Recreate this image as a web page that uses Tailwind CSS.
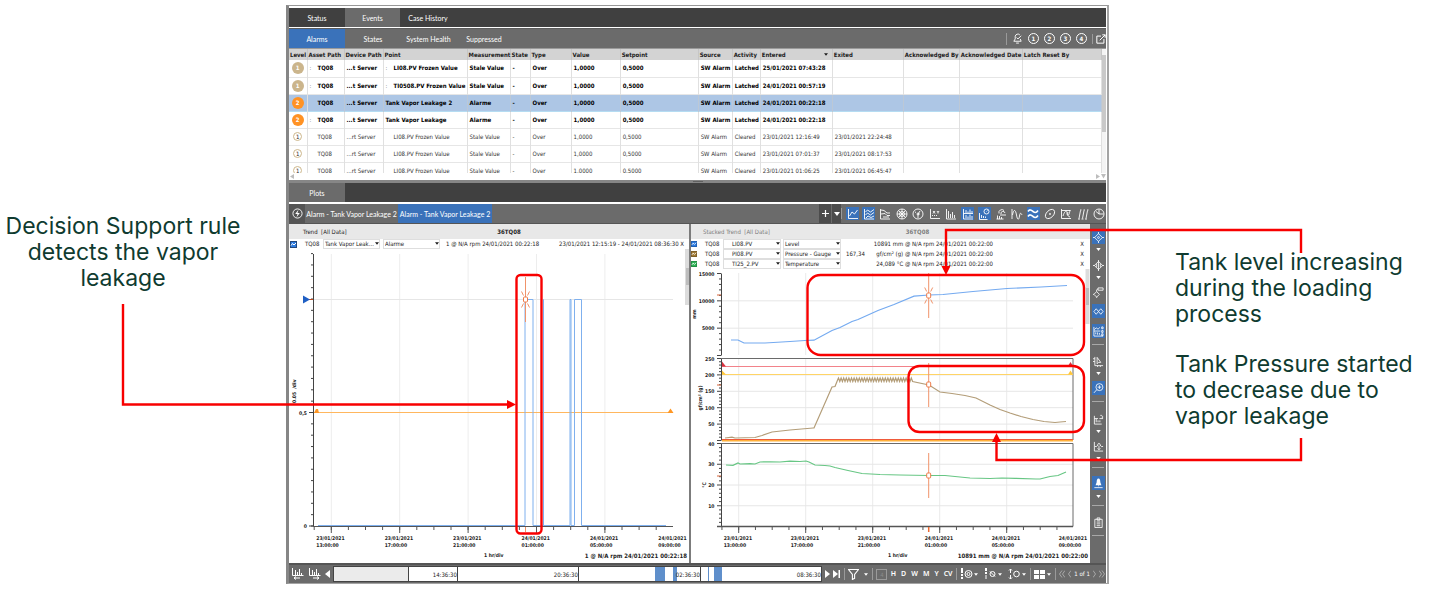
<!DOCTYPE html>
<html lang="en">
<head>
<meta charset="utf-8">
<title>Alarm events and plots</title>
<meta name="viewport" content="width=device-width, initial-scale=1">
<script src="https://cdn.jsdelivr.net/npm/@tailwindcss/browser@4"></script>
</head>
<body class="bg-white">
<svg class="hidden" aria-hidden="true">
  <defs>
    <g id="i-trend"><path d="M1.500 1v9.500h9.500M2.500 8l2.500-4 2.500 2 3-4"/></g>
    <g id="i-stack"><path d="M1.500 1v10h9.500M2.500 4l2-2 3 2 3.500-2.500M2.500 7l2-2 3 2 3.500-2.500M3 10l2-2 3 1.500 3-1.500"/></g>
    <g id="i-multi"><path d="M1.500 1v10h9.500M2 2l3 .5 3 2.500h3M2 6l4-.5 2 2h3M4 9h6"/></g>
    <g id="i-polar"><circle cx="6" cy="6" r="5"/><circle cx="6" cy="6" r="2.500"/><path d="M1 6h10M6 1v10M2.500 2.500l7 7M9.500 2.500l-7 7"/></g>
    <g id="i-dial"><circle cx="6" cy="6" r="5"/><path d="M6 6l2-3M6 6v4M6 6h1.500M3 4l1 .5"/><circle cx="6" cy="6" r="1"/></g>
    <g id="i-xy"><path d="M1.500 1v9.500h9.500M3 7.500h1M5 7.500h1M7 7.500h1M4 3l2 2.500M6 3L4 5.500M8 3l1 1.500 1-1.500M9 4.500v1"/></g>
    <g id="i-bars"><path d="M1.500 1v10h9.500M3.500 3v7M5.500 6v4M7.500 4v6M9.500 7v3"/></g>
    <g id="i-bars2"><path d="M1.500 1v10h9.500M1.500 5.500h9.500M4 2v3M6 3.500v1.500M8 1.500v3.500M10 3v2M4 7v3M6 8.500v1.500M8 6.500v3.500M10 8v2"/></g>
    <g id="i-orbitbar"><circle cx="8.500" cy="3.500" r="2.500"/><path d="M1.500 5v6.500h8M3.500 7v3M5.500 8v2M7.500 8.500v1.500M8.500 3.500l1-1"/></g>
    <g id="i-casc"><path d="M1.500 11h7M2.500 11V7.500M4.500 11V8M6.500 11V9M4 5.500a3 3 0 0 1 5-3M6 6a2 2 0 0 1 4-1M5 7h6"/></g>
    <g id="i-wave"><path d="M1 1v10M1.500 7c1-6 3-6 4 0s2.500 5 3 1 1.500-3 2.500-1"/></g>
    <g id="i-waves"><path stroke-width="1.600" d="M1 3.500c2-3 3.500-1 5 0s3 2 5-1M1 8.500c2-3 3.500-1 5 0s3 2 5-1"/></g>
    <g id="i-orbit"><ellipse cx="6" cy="6" rx="5.500" ry="3.500" transform="rotate(-45 6 6)"/><circle cx="6" cy="6" r=".6"/></g>
    <g id="i-env"><path d="M1.500 1v9.500h9.500M2 2.500h8.500M3 8c2-6 4-6 4-3s2 4 3-3M10 9c-2 0-3-3-2-5"/></g>
    <g id="i-water"><path d="M1 11h2M4.500 11h2M8 11h2M2 10.500l1.500-8M5.500 10.500l1.500-8M9 10.500l1.500-8M3 2h1.500M6.500 2H8M10 2h1.500"/></g>
    <g id="i-clock"><circle cx="6" cy="6" r="5"/><path d="M6 1.500v4.500h4.500M6 6L3 3.500"/></g>
    <g id="i-target"><path d="M6 1.800L10.200 6 6 10.200 1.800 6zM6 0v2M6 10v2M0 6h2M10 6h2"/><circle cx="6" cy="6" r="1"/></g>
    <g id="i-target2"><path d="M6 1.500L10.500 6 6 10.500 1.500 6zM6 0v12M0 6h2M10 6h2M4 4v4M8 4v4"/></g>
    <g id="i-tag"><path d="M4 5L7 8l-3 3-3-3zM4 12v-1M0 8h1M4 5V3l1.500-1M5.500 1h5.500v2.500H5.500z"/></g>
    <g id="i-pair"><path d="M3.500 3L6 6 3.500 9 1 6zM8.500 3L11 6 8.500 9 6 6z"/></g>
    <g id="i-panel"><path d="M1 1v10h10M1.500 4l2-2 2 1.500 2-2M1 5.500h7M3 9v-2M5 9.500V7M7 9.500V7.500M9.500 1h1.500v2H9.500zM9.500 5h1.500v2H9.500zM9.500 8.500h1.500v2H9.500z"/></g>
    <g id="i-cursor"><path d="M2 1v9.500h9M0 3h2M0 6h2M5 10.500v1.500M8 10.500v1.500M4.500 1.500V8.500l1.500-1.500h2.500z"/></g>
    <g id="i-zoom"><circle cx="7" cy="4.500" r="3.800"/><path d="M4.200 7.200L1 10.800M7 2.500v4M5 4.500h4"/></g>
    <g id="i-report"><path d="M1.500 2v9h8M3.500 9V5M5.500 9V7M7.500 9V7M1.500 5h4M7 5h4M8 1.500a2 2 0 0 1 2.500 2.500l-1-.5"/></g>
    <g id="i-peak"><path d="M1.500 1v10h9.500M2 6h2c1 0 1-3.500 2.500-3.500S8 6 9 6h2M6.500 5v4.500M5 8l1.500 1.500L8 8"/></g>
    <g id="i-bell"><path fill="#fff" stroke="none" d="M6 .5c1.600 0 2 2 2 4L9.200 8H2.800L4 4.500c0-2 .4-4 2-4z"/><path d="M1.500 10.500h9M6 8v1"/></g>
    <g id="i-clip"><path d="M2 2.500h8v9H2zM4.500 1h3v2.500h-3zM4 5.500h4M4 7.500h4M4 9.500h4"/></g>
    <g id="i-caret"><path fill="currentColor" stroke="none" d="M0 0h6L3 4z"/></g>
    <g id="i-trace"><path fill="none" stroke="#fff" d="M1 4.500l1.500-2 1.500 1.500 2-2"/></g>
  </defs>
</svg>

<div class="relative min-h-screen w-full overflow-hidden">
<main class="grid w-full grid-cols-[286fr_823fr_320fr] items-start">

  <!-- Left callout -->
  <p class="mt-[213px] pr-10 text-center font-['Inter',sans-serif] text-[23px] leading-[26px] whitespace-nowrap text-[#0f3b30]">Decision Support rule<br>detects the vapor<br>leakage</p>

  <!-- Application window -->
  <section class="mt-[5px] min-w-0 border-t border-r-2 border-b border-l-[3px] border-t-[#989898] border-r-[#a4a4a4] border-b-[#a4a4a4] border-l-[#868686] pt-[2px] pr-px font-['DejaVu_Sans_Condensed','DejaVu_Sans',sans-serif] text-[6px] leading-[8px] text-[#1c1c1c]">

    <nav class="flex h-[19px] bg-[#404040] font-['Lato',sans-serif] text-[7px] text-white">
      <button class="w-14">Status</button>
      <button class="w-[55px] bg-[#6b6b6b]">Events</button>
      <button class="w-14">Case History</button>
    </nav>
    <div class="mt-px flex h-[21px] items-stretch border-t border-b border-t-[#5c5c5c] border-b-[#9a9a9a] bg-[#6b6b6b] font-['Lato',sans-serif] text-[7px] text-white">
      <button class="w-14 bg-[#3a72ba]">Alarms</button>
      <button class="w-14">States</button>
      <button class="w-[55px]">System Health</button>
      <button class="w-14">Suppressed</button>
      <div class="ml-auto flex items-center gap-[5px] font-['DejaVu_Sans_Condensed',sans-serif]">
        <span class="h-3 w-px bg-[#9a9a9a]"></span>
        <button aria-label="Acknowledge alarm"><svg class="size-[11px]" viewBox="0 0 12 12" fill="none" stroke="#fff"><path d="M3.500 3.500a3 3 0 0 1 5-1.500M3.500 3.500v3L2 9h8L9 6.500M4.500 11h3M5 5l1.500 1.500L10 3"/></svg></button>
        <button class="size-[11px] rounded-full border border-white text-[6px] leading-[9px] font-bold">1</button>
        <button class="size-[11px] rounded-full border border-white text-[6px] leading-[9px] font-bold">2</button>
        <button class="size-[11px] rounded-full border border-white text-[6px] leading-[9px] font-bold">3</button>
        <button class="size-[11px] rounded-full border border-white text-[6px] leading-[9px] font-bold">4</button>
        <button class="border-l border-[#9a9a9a] pl-[3px]" aria-label="Open in new window"><svg class="size-[10px]" viewBox="0 0 12 12" fill="none" stroke="#fff" stroke-width="1.200"><path d="M6 2.500H1v8.500h8.500V6M4.500 7.500L11 1M7.500 1H11v3.500"/></svg></button>
      </div>
    </div>

    <!-- Alarm table -->
    <div class="flex h-[124px] overflow-hidden">
      <table class="h-max w-full table-fixed border-collapse text-left whitespace-nowrap">
        <colgroup>
          <col class="w-[18px]"><col class="w-[37px]"><col class="w-[39px]"><col class="w-[84px]"><col class="w-[43px]"><col class="w-[20px]"><col class="w-[41px]"><col class="w-[49px]"><col class="w-[78px]"><col class="w-[34px]"><col class="w-[28px]"><col class="w-[72px]"><col class="w-[71px]"><col class="w-[56px]"><col class="w-[63px]"><col class="w-[79px]">
        </colgroup>
        <thead id="alarm-head"></thead>
        <tbody id="alarm-rows"></tbody>
      </table>
      <div class="w-1 shrink-0 bg-[#f4f4f4]"><div class="mt-[6px] h-[77px] bg-[#c9c9c9]"></div></div>
    </div>
    <div class="flex h-[7px] items-center justify-between text-[#bdbdbd]">
      <svg class="size-[5px]" viewBox="0 0 5 5" fill="currentColor"><path d="M5 0v5L1 2.500z"/></svg>
      <svg class="h-[5px] w-[10px]" viewBox="0 0 10 5" fill="currentColor"><path d="M0 0v5l4-2.500zM5 0h5L7.500 4.500z"/></svg>
    </div>
    <div class="flex h-[3px] items-center justify-center bg-[#868686]"><span class="h-px w-[10px] bg-[#606060]"></span></div>

    <nav class="flex h-[19px] bg-[#404040] font-['Lato',sans-serif] text-[7px] text-white">
      <button class="w-14 bg-[#6b6b6b]">Plots</button>
    </nav>
    <div class="mt-[2px] flex h-5 items-stretch border-b border-[#555] bg-[#6b6b6b] font-['Lato',sans-serif] text-[7px] text-white">
      <button class="flex w-4 items-center justify-center bg-[#555]" aria-label="Live data"><svg class="size-[11px]" viewBox="0 0 12 12" fill="none" stroke="#fff"><circle cx="6" cy="6" r="5"/><path fill="#fff" stroke="none" d="M7 2L3.500 6.500H6L5 10l3.500-4.500H6z"/></svg></button>
      <button class="w-[93px] whitespace-nowrap">Alarm - Tank Vapor Leakage 2</button>
      <button class="w-[94px] bg-[#3a72ba] whitespace-nowrap">Alarm - Tank Vapor Leakage 2</button>
      <div class="ml-auto flex w-[287px] items-stretch">
        <button class="flex w-3 items-center justify-center bg-[#4c4c4c]" aria-label="Add plot"><svg class="size-[7px]" viewBox="0 0 7 7" stroke="#fff" stroke-width="1.200"><path d="M0 3.500h7M3.500 0v7"/></svg></button>
        <button class="ml-px flex w-[9px] items-center justify-center bg-[#4c4c4c]" aria-label="More plots"><svg class="h-1 w-[6px]" viewBox="0 0 6 4"><use href="#i-caret"/></svg></button>
        <span class="my-1 w-px bg-[#9a9a9a]"></span>
        <div id="plot-tools" class="ml-1 flex flex-1 items-center justify-between"></div>
      </div>
    </div>

    <!-- Plot panels -->
    <div class="flex items-stretch">
      <article class="min-w-0 flex-[400_1_0]">
        <header class="relative h-[15px] bg-[#e8e8e8] pt-[4px] pl-[14px]">Trend&nbsp; [All Data]<strong class="absolute inset-x-0 top-[4px] pl-10 text-center">36TQ08</strong></header>
        <div class="flex h-[10px] items-center whitespace-nowrap">
          <label class="relative flex items-center"><input type="checkbox" checked class="ml-[1px] size-[7px] appearance-none border border-[#23477a] bg-[#2d7be0]"><svg class="pointer-events-none absolute left-[1px] size-[7px]" viewBox="0 0 7 7"><use href="#i-trace"/></svg><span class="ml-2 w-[18px]">TQ08</span></label>
          <div class="relative w-[57px]"><select aria-label="Point" class="block w-full appearance-none border border-[#dedede] bg-white pl-[1px]"><option>Tank Vapor Leak...</option></select><svg class="pointer-events-none absolute top-[3px] right-[1px] h-[3px] w-1" viewBox="0 0 6 4"><use href="#i-caret"/></svg></div>
          <div class="relative ml-[3px] w-[57px]"><select aria-label="Measurement" class="block w-full appearance-none border border-[#dedede] bg-white pl-[1px]"><option>Alarme</option></select><svg class="pointer-events-none absolute top-[3px] right-[1px] h-[3px] w-1" viewBox="0 0 6 4"><use href="#i-caret"/></svg></div>
          <span class="ml-[6px]">1 @ N/A rpm 24/01/2021 00:22:18</span>
          <span class="ml-auto pr-[5px]">23/01/2021 12:15:19 - 24/01/2021 08:36:30 <button aria-label="Remove trace">X</button></span>
        </div>
        <svg id="trend" class="block h-auto w-full" viewBox="289 249 400 314" fill="none"></svg>
      </article>
      <article class="min-w-0 flex-[399_1_0] border-l-2 border-[#7c7c7c]">
        <header class="relative h-[15px] bg-[#e8e8e8] pt-[4px] pl-[12px] text-[#7d7d7d]">Stacked Trend&nbsp; [All Data]<strong class="absolute inset-x-0 top-[4px] pl-[54px] text-center">36TQ08</strong></header>
        <div id="stack-legend"></div>
        <svg id="stack" class="block h-auto w-full" viewBox="691 269 399 294" fill="none"></svg>
      </article>
      <aside id="side-tools" class="flex w-4 flex-col items-center bg-[#6b6b6b] text-white"></aside>
    </div>

    <!-- Timeline and navigation -->
    <footer class="flex h-5 items-stretch border-t-2 border-[#555] bg-[#6b6b6b] text-[7px] text-white">
      <div class="flex w-11 items-center gap-[5px] pl-[3px]">
        <button aria-label="Previous sample"><svg class="size-3" viewBox="0 0 12 12" fill="none" stroke="#fff"><path d="M.5 0v7.500h11M3.500 2v5M5.500 4v3M7.500 1v6M9.500 5v2M2 10h6M4 8.500L2 10l2 1.500"/></svg></button>
        <button aria-label="Next sample"><svg class="size-3" viewBox="0 0 12 12" fill="none" stroke="#fff"><path d="M.5 0v7.500h11M3.500 2v5M5.500 4v3M7.500 1v6M9.500 5v2M4 10h6M8 8.500l2 1.500-2 1.500"/></svg></button>
        <button class="ml-[-1px]" aria-label="Scroll back"><svg class="h-2 w-[5px]" viewBox="0 0 5 8" fill="#fff"><path d="M5 0v8L0 4z"/></svg></button>
      </div>
      <div class="relative my-px flex flex-1 border border-[#444] bg-white text-right text-[6px] leading-[15px] text-[#222]">
        <span class="flex-[75_1_0] border-r border-[#444] bg-[#ebebeb]"></span>
        <span class="flex-[48_1_0] border-r border-[#444]">14:36:30</span>
        <span class="relative flex-[121_1_0] border-r border-[#444]">20:36:30</span>
        <span class="relative flex-[122_1_0] border-r border-[#444]"><i class="absolute inset-y-0 right-[35px] w-[10px] bg-[#5f8fcb]"></i><i class="absolute inset-y-0 right-[23px] w-[4px] bg-[#5f8fcb]"></i><b class="relative font-normal">02:36:30</b></span>
        <span class="relative flex-[121_1_0]"><i class="absolute inset-y-0 left-[7px] w-px bg-[#5f8fcb]"></i><i class="absolute inset-y-0 left-[13px] w-2 bg-[#5f8fcb]"></i>08:36:30</span>
      </div>
      <div class="flex w-[284px] items-center justify-between pr-[1px] pl-[3px]">
        <button aria-label="Play"><svg class="h-2 w-[5px]" viewBox="0 0 5 8" fill="#fff"><path d="M0 0v8l5-4z"/></svg></button>
        <button aria-label="Go to end"><svg class="h-2 w-[7px]" viewBox="0 0 7 8" fill="#fff"><path d="M0 0v8l5-4zM5.500 0H7v8H5.500z"/></svg></button>
        <span class="h-3 w-px bg-[#9a9a9a]"></span>
        <button aria-label="Filter" class="flex items-center gap-[5px]"><svg class="size-[11px]" viewBox="0 0 10 10" fill="none" stroke="#fff"><path d="M.5 .5h9L6 5v3.500l-2 1V5z"/></svg><svg class="h-[3px] w-1" viewBox="0 0 6 4"><use href="#i-caret"/></svg></button>
        <span class="h-3 w-px bg-[#9a9a9a]"></span>
        <button class="size-[11px] border border-[#9a9a9a] text-[6px] leading-[9px] text-[#8a8a8a]">4</button>
        <div class="flex gap-[5px] font-['Noto_Sans',sans-serif] text-[7px] font-semibold"><button>H</button><button>D</button><button>W</button><button>M</button><button>Y</button><button>CV</button></div>
        <span class="h-3 w-px bg-[#9a9a9a]"></span>
        <div class="flex items-center gap-[6px]">
        <button aria-label="Reference" class="flex items-center gap-[1px]"><svg class="h-3 w-[13px]" viewBox="0 0 13 12" fill="none" stroke="#fff"><path stroke-width="2" d="M2 0v5M2 6v2M2 9v2"/><circle cx="8.500" cy="6" r="3.500"/><circle cx="8.500" cy="6" r="1.500"/></svg><svg class="h-[3px] w-1" viewBox="0 0 6 4"><use href="#i-caret"/></svg></button>
        <button aria-label="Compensation" class="flex items-center gap-[1px]"><svg class="h-3 w-[13px]" viewBox="0 0 13 12" fill="none" stroke="#fff"><path stroke-width="2" d="M2 0v3M2 4v2"/><path d="M2 7v4M6 3.500l5 5"/><circle cx="8.500" cy="6" r="2.500"/></svg><svg class="h-[3px] w-1" viewBox="0 0 6 4"><use href="#i-caret"/></svg></button>
        <button aria-label="Scale" class="flex items-center gap-[1px]"><svg class="h-3 w-[13px]" viewBox="0 0 13 12" fill="none" stroke="#fff"><path d="M2.500 1v4M1 2.500L2.500 1 4 2.500M2.500 7v4M1 9.500L2.500 11 4 9.500"/><circle cx="8.500" cy="6" r="2.800"/></svg><svg class="h-[3px] w-1" viewBox="0 0 6 4"><use href="#i-caret"/></svg></button>
        </div>
        <span class="h-3 w-px bg-[#9a9a9a]"></span>
        <button aria-label="Layout" class="flex items-center gap-[2px]"><svg class="h-[9px] w-[11px]" viewBox="0 0 11 9" fill="#fff"><path d="M0 0h5v4H0zM6 0h5v4H6zM0 5h5v4H0zM6 5h5v4H6z"/></svg><svg class="h-[3px] w-1" viewBox="0 0 6 4"><use href="#i-caret"/></svg></button>
        <span class="h-3 w-px bg-[#9a9a9a]"></span>
        <div class="flex items-center gap-[3px] text-[6px] whitespace-nowrap">
          <button aria-label="First page"><svg class="h-2 w-[6px]" viewBox="0 0 6 8" fill="none" stroke="#a8a8a8"><path d="M3 .5L.5 4 3 7.500M6 .5L3.500 4 6 7.500"/></svg></button>
          <button aria-label="Previous page"><svg class="h-2 w-[3px]" viewBox="0 0 3 8" fill="none" stroke="#a8a8a8"><path d="M3 .5L.5 4 3 7.500"/></svg></button>
          <span>1 of 1</span>
          <button aria-label="Next page"><svg class="h-2 w-[3px]" viewBox="0 0 3 8" fill="none" stroke="#a8a8a8"><path d="M0 .5L2.500 4 0 7.500"/></svg></button>
          <button aria-label="Last page"><svg class="h-2 w-[6px]" viewBox="0 0 6 8" fill="none" stroke="#a8a8a8"><path d="M0 .5L2.500 4 0 7.500M3 .5L5.500 4 3 7.500"/></svg></button>
        </div>
      </div>
    </footer>
  </section>

  <!-- Right callouts -->
  <div class="mt-[249px] pl-[66px] font-['Inter',sans-serif] text-[23px] leading-[26px] whitespace-nowrap text-[#0f3b30]">
    <p>Tank level increasing<br>during the loading<br>process</p>
    <p class="mt-6">Tank Pressure started<br>to decrease due to<br>vapor leakage</p>
  </div>
</main>

<!-- Callout connectors and highlight frames -->
<svg class="pointer-events-none absolute top-0 left-0 h-auto w-full" viewBox="0 0 1429 600" fill="none" stroke="#f80000" stroke-width="2.400">
  <path d="M123 304V404.500H508M1301 253V230H946V267M1301 438V460H996.500V441"/>
  <path fill="#f80000" stroke="none" d="M507 400v9l9-4.500zM941.500 266h9l-4.500 9zM992 442h9l-4.500-9z"/>
  <rect x="516.500" y="275" width="25" height="258.500" rx="4"/>
  <rect x="807.500" y="275" width="276.500" height="80" rx="13"/>
  <rect x="908.500" y="366" width="175.500" height="66" rx="11"/>
</svg>
</div>

<script>
const byId = id => document.getElementById(id);

// ---- Alarm table ----
const heads = ['Level','Asset Path','Device Path','Point','Measurement','State','Type','Value','Setpoint','Source','Activity','Entered','Exited','Acknowledged By','Acknowledged Date','Latch Reset By'];
byId('alarm-head').innerHTML = '<tr class="h-[11px] bg-[#d3d3d3]">' + heads.map(h =>
  `<th scope="col" class="border-r border-[#c6c6c6] px-[1px] py-0 leading-[8px] font-bold">${h === 'Entered' ? '<span class="flex items-center justify-between pr-[3px]">Entered<svg class="h-[3px] w-1" viewBox="0 0 6 4"><use href="#i-caret"/></svg></span>' : h}</th>`).join('') + '</tr>';
const mark = '<span class="inline-block w-2 font-normal text-[#777]">:</span>';
const blank = '<span class="inline-block w-2"></span>';
const rows = [
  [1,mark + 'TQ08','...t Server',mark + 'LI08.PV Frozen Value','Stale Value','Latched','25/01/2021 07:43:28',''],
  [1,mark + 'TQ08','...t Server',mark + 'TI0508.PV Frozen Value','Stale Value','Latched','24/01/2021 00:57:19',''],
  [2,blank + 'TQ08','...t Server','Tank Vapor Leakage 2','Alarme','Latched','24/01/2021 00:22:18',''],
  [2,mark + 'TQ08','...t Server','Tank Vapor Leakage','Alarme','Latched','24/01/2021 00:22:18',''],
  [0,blank + 'TQ08','...rt Server',blank + 'LI08.PV Frozen Value','Stale Value','Cleared','23/01/2021 12:16:49','23/01/2021 22:24:48'],
  [0,blank + 'TQ08','...rt Server',blank + 'LI08.PV Frozen Value','Stale Value','Cleared','23/01/2021 07:01:37','23/01/2021 08:17:53'],
  [0,blank + 'TQ08','...rt Server',blank + 'LI08.PV Frozen Value','Stale Value','Cleared','23/01/2021 01:06:25','23/01/2021 06:45:47'],
];
const badge = ['size-[9px] border border-[#cdb78c] bg-white text-[#222] leading-[7px]',
  'size-3 bg-[#cbb58c] text-white leading-[12px]',
  'size-3 bg-[#ff9224] text-white leading-[12px]'];
byId('alarm-rows').innerHTML = rows.map((r, i) => {
  const cells = [r[1], r[2], r[3], r[4], '-', 'Over', '1,0000', '0,5000', 'SW Alarm', r[5], r[6], r[7], '', '', ''];
  return `<tr class="h-[17px] border-b ${i === 2 ? 'border-[#b5dcf2] bg-[#adc6e5]' : 'border-[#e6e6e6]'} ${i < 4 ? 'font-bold text-black' : 'text-[#333]'}">
    <td class="border-r border-[#e0e0e0] p-0"><span class="mx-auto block rounded-full text-center ${badge[r[0]]}">${r[0] || 1}</span></td>` +
    cells.map((c, k) => `<td class="border-r ${i === 2 ? 'border-[#bcc8d6]' : 'border-[#e0e0e0]'} py-0 pl-[2px]">${c}</td>`).join('') + '</tr>';
}).join('');

// ---- Toolbars ----
const icon = (name, cls) => `<svg class="${cls}" viewBox="0 0 12 12" fill="none" stroke="#fff" stroke-width="0.900"><use href="#i-${name}"/></svg>`;
const active = ['trend','stack','bars2','orbitbar','waves'];
byId('plot-tools').innerHTML = ['trend','stack','multi','polar','dial','xy','bars','bars2','orbitbar','casc','wave','waves','orbit','env','water','clock'].map(n =>
  `<button aria-label="${n} plot" class="flex size-[13px] items-center justify-center ${active.includes(n) ? 'bg-[#3a72ba]' : ''}">${icon(n, 'size-3')}</button>`).join('');

const tool = (n, gap, on) => `<button aria-label="${n}" class="flex h-[14px] w-[13px] items-center justify-center ${gap} ${on ? 'bg-[#3a72ba]' : ''}">${icon(n, 'size-[11px]')}</button>`;
const caret = gap => `<svg class="h-[3px] w-[5px] ${gap}" viewBox="0 0 6 4"><use href="#i-caret"/></svg>`;
const rule = gap => `<span class="h-px w-3 bg-[#a8a8a8] ${gap}"></span>`;
byId('side-tools').innerHTML =
  tool('target', 'mt-[6px]', true) + caret('mt-1') + tool('target2', 'mt-[7px]') + caret('mt-1') +
  tool('tag', 'mt-[6px]') + tool('pair', 'mt-[5px]', true) + tool('panel', 'mt-[6px]', true) + rule('mt-[6px]') +
  tool('cursor', 'mt-[9px]') + caret('mt-1') + tool('zoom', 'mt-[6px]', true) + rule('mt-[6px]') +
  tool('report', 'mt-[10px]') + caret('mt-1') + tool('peak', 'mt-[6px]') + caret('mt-1') + rule('mt-[7px]') +
  tool('bell', 'mt-2', true) + caret('mt-[5px]') + rule('mt-[7px]') + tool('clip', 'mt-[9px]') + rule('mt-[6px]');

// ---- Stacked trend legend ----
const sel = (label, v) => `<div class="relative ml-[2px] w-[58px] shrink-0"><select aria-label="${label}" class="block w-full appearance-none border border-[#dedede] bg-white ${label === 'Point' ? 'pl-2' : 'pl-[1px]'}"><option>${v}</option></select><svg class="pointer-events-none absolute top-[3px] right-[1px] h-[3px] w-1" viewBox="0 0 6 4"><use href="#i-caret"/></svg></div>`;
byId('stack-legend').innerHTML = [
  ['bg-[#2d7be0]','LI08.PV','Level','','10891 mm @ N/A rpm 24/01/2021 00:22:00'],
  ['bg-[#a07a35]','PI08.PV','Pressure - Gauge','167,34','gf/cm² (g) @ N/A rpm 24/01/2021 00:22:00'],
  ['bg-[#2fb457]','TI25_2.PV','Temperature','','24,089 °C @ N/A rpm 24/01/2021 00:22:00'],
].map(r => `<div class="flex h-[10px] items-center whitespace-nowrap">
  <label class="relative flex items-center"><input type="checkbox" checked class="size-[6px] appearance-none border border-black/20 ${r[0]}"><svg class="pointer-events-none absolute left-0 size-[6px]" viewBox="0 0 7 7"><use href="#i-trace"/></svg><span class="ml-2 w-4">TQ08</span></label>
  ${sel('Point', r[1])}${sel('Measurement', r[2])}
  <span class="ml-[5px] w-6">${r[3]}</span><span class="w-[123px] text-right">${r[4]}</span>
  <button class="mr-[6px] ml-auto" aria-label="Remove trace">X</button></div>`).join('');

// ---- Charts ----
const line = (x1, y1, x2, y2, c, w = 1) => `<path d="M${x1} ${y1}L${x2} ${y2}" stroke="${c}" stroke-width="${w}"/>`;
const text = (x, y, s, anchor = 'start', size = 5, extra = '') => `<text x="${x}" y="${y}" text-anchor="${anchor}" font-size="${size}" fill="#222" ${extra}>${s}</text>`;
const bold = 'font-weight="bold"';
const stamps = [['23/01/2021','13:00:00'],['23/01/2021','17:00:00'],['23/01/2021','21:00:00'],['24/01/2021','01:00:00'],['24/01/2021','05:00:00'],['24/01/2021','09:00:00']];
const burst = (x, y) => [[-4,-8,-2,-4],[4,-8,2,-4],[-4,8,-2,4],[4,8,2,4]].map(b => line(x + b[0], y + b[1], x + b[2], y + b[3], '#f0936a')).join('');
const marker = (x, y, top, bottom) => line(x, top, x, bottom, '#f0936a') + `<rect x="${x - 2}" y="${y - 2.500}" width="4" height="5" rx="1" stroke="#ee7a48" fill="#fff"/>`;
const xAxis = (x0, step, y, end) => {
  let s = '';
  stamps.forEach((t, i) => {
    const x = x0 + step * i;
    if (i < 5) s += line(x, y, x, y + 6, '#555');
    s += text(x - 15, 540, t[0], 'start', 5, bold) + text(x - 15, 547, t[1], 'start', 5, bold);
  });
  for (let x = x0 - step / 4; x < end; x += step / 4) s += line(x, y, x, y + 3, '#555');
  return s;
};

let g = '';
for (let i = 0; i < 5; i++) g += line(331.300 + 68.400 * i, 254, 331.300 + 68.400 * i, 526, '#ededed');
g += line(314, 299.500, 673, 299.500, '#e6e6e6');
g += line(313.500, 254, 313.500, 527, '#444') + line(313, 526.500, 673, 526.500, '#555');
for (let i = 0; i <= 24; i++) g += line(311, 526 - 11.350 * i, 313, 526 - 11.350 * i, '#444');
g += line(309, 412.500, 313, 412.500, '#444') + line(309, 526, 313, 526, '#444') + line(309, 299.500, 313, 299.500, '#c0481f');
g += line(314, 412.500, 673, 412.500, '#ffb75e') + '<path fill="#ff9724" d="M314 413l2-4h2l1 4zM667.500 413l3-4.500 3 4.500z"/>';
g += '<path fill="#1f5fc4" d="M303 295.500v8l7-4z"/>';
g += '<path stroke="#7fb0ee" d="M318 525.500H525V299.500H533V525.500H543.500V299.500V525.500H570V299.500H571V525.500H574.500V299.500H581.500V525.500H666"/>';
g += marker(525.500, 299.500, 277, 322) + burst(525.500, 299.500) + line(525.500, 527, 525.500, 532, '#f0936a');
g += xAxis(331.300, 68.400, 527, 673);
g += text(307, 414.500, '0,5', 'end', 5, bold) + text(307, 528, '0', 'end', 5, bold);
g += text(0, 0, '0.05&#160; /div', 'start', 5, bold + ' transform="translate(296 403) rotate(-90)"');
g += text(484, 556.500, '1 hr/div', 'start', 5, bold) + text(687, 557.500, '1 @ N/A rpm 24/01/2021 00:22:18', 'end', 6, bold);
g += '<path fill="#dcdcdc" d="M685 249h4v56h-4z"/><path fill="#bdbdbd" d="M686 268h3v17h-3z"/>';
byId('trend').innerHTML = g;

let s = '';
for (let i = 0; i < 5; i++) { const x = 738.700 + 67 * i; s += line(x, 273, x, 355, '#ebebeb') + line(x, 359, x, 440, '#ebebeb') + line(x, 444, x, 526, '#ebebeb'); }
const axis = (top, bottom, labels, minor) => {
  let o = line(721.500, top, 721.500, bottom, '#444');
  const step = (bottom - top) / (labels.length - 1);
  labels.forEach((l, i) => {
    const y = top + step * i;
    o += line(717, y, 721, y, '#444');
    if (l) o += text(714.500, y + 2, l, 'end', 5, bold);
    if (i && i < labels.length - 1) o += line(722, y, 1073, y, '#e6e6e6');
    if (i < labels.length - 1) for (let k = 1; k < minor; k++) o += line(719, y + step * k / minor, 721, y + step * k / minor, '#444');
  });
  return o;
};
s += axis(273.500, 355.500, ['15000','10000','5000',''], 5);
s += axis(358.500, 440.500, ['250','200','150','100','50',''], 5);
s += axis(443.500, 526.500, ['40','30','20','10',''], 5);
s += '<path stroke="#6a6a6a" d="M721 358.500H1073V440M721 443.500H1073V526.500"/><path stroke="#555" stroke-width="1.500" d="M717 526.500H1073"/>';
s += line(722, 366.500, 1073, 366.500, '#f2828a') + line(722, 374.500, 1073, 374.500, '#ffd466') + line(722, 439.500, 1073, 439.500, '#ef5a3a') + line(722, 440.800, 1073, 440.800, '#ffb03a', 1.500);
s += '<path fill="#d8323f" d="M722 366.500v-5l4 5zM1068 366l2.500-4 2.500 4z"/><path fill="#ffc63a" d="M722 374.500v-4l4 4zM1068 374.500l2.500-4 2.500 4z"/>';
s += line(717, 295, 721, 295, '#d9663a') + line(717, 385, 721, 385, '#d9663a') + line(717, 476, 721, 476, '#d9663a');
s += '<path stroke="#74aaf0" stroke-width="1.200" d="M731 340h7l6 3h21l25-1.500 15-1 9-.3 18-9.700 8-3 12-6 6-2 20-9 16-6 20-8.300 15-1.200 14-.5 30-3 34-3 34-1.500 26-1.500"/>';
let zig = '';
for (let x = 838.500, k = 0; x < 913; x += 1.300, k++) zig += `L${x.toFixed(1)} ${k % 2 ? 381.500 : 378}`;
s += `<path stroke="#b39d78" stroke-width="1.200" d="M725 438L732 437.200 735 438 755 437.500 762 435.500 772 432 790 430 813 428H814L832 387 835 386.500 838 379${zig}L929 385 940 392 952 393.500 965 395.500 976 398 990 405 1000 409.500 1010 413 1021 416.500 1033 419.500 1044 421.500 1055 422.500 1060 422 1066 421.500"/>`;
s += '<path stroke="#67c684" stroke-width="1.200" d="M726 465L733 465.300 738 463 740 464 750 463.700 755 464 760 462 770 461.800 780 462 790 461.200 800 461.500 806 461 809 462 815 465 825 465.500 830 466 835 467.500 848 470.500 862 473.500 880 474.500 900 475 929 475.500H945L970 478 990 478.500 1002 478 1015 478.300 1036 479 1040 479 1050 476.500 1058 475.500 1066 472"/>';
s += marker(928.700, 295.500, 273, 318) + burst(928.700, 295.500) + marker(928.700, 384.500, 363, 407) + marker(928.700, 475.500, 453, 498);
s += xAxis(738.700, 67, 527, 1073) + line(928.700, 527, 928.700, 532, '#ee6a30', 1.500);
s += text(0, 0, 'mm', 'middle', 5, bold + ' transform="translate(696 314) rotate(-90)"') + text(0, 0, 'gf/cm² (g)', 'middle', 5, bold + ' transform="translate(702 398) rotate(-90)"') + text(0, 0, '°C', 'middle', 5, bold + ' transform="translate(706 485) rotate(-90)"');
s += text(888, 556.500, '1 hr/div', 'start', 5, bold) + text(1088, 557.500, '10891 mm @ N/A rpm 24/01/2021 00:22:00', 'end', 6, bold);
s += '<path fill="#dcdcdc" d="M1085.500 269h4v55h-4z"/><path fill="#bdbdbd" d="M1086 288h3v17h-3z"/>';
byId('stack').innerHTML = s;
</script>
</body>
</html>
